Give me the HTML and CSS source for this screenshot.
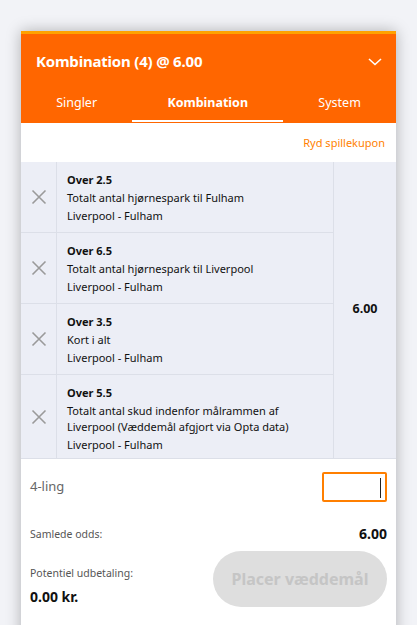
FILE: index.html
```html
<!DOCTYPE html>
<html lang="da">
<head>
<meta charset="utf-8">
<link rel="stylesheet" href="styles.css">
</head>
<body>
<div class="card">
  <div class="head">
    <div class="title-row">
      <span class="title">Kombination (4) @ 6.00</span>
      <svg class="chev" width="14" height="8" viewBox="0 0 14 8"><path d="M1 1 L7 6.5 L13 1" fill="none" stroke="#fff" stroke-width="1.6"/></svg>
    </div>
    <div class="tabs">
      <div class="tab">Singler</div>
      <div class="tab active">Kombination</div>
      <div class="tab">System</div>
    </div>
  </div>
  <div class="clear-row"><span class="clear">Ryd spillekupon</span></div>
  <div class="bets">
    <div class="rows">
      <div class="row">
        <div class="rm"><svg width="16" height="16" viewBox="0 0 16 16"><path d="M1.5 1.5 L14.5 14.5 M14.5 1.5 L1.5 14.5" stroke="#9a9a9a" stroke-width="1.6"/></svg></div>
        <div class="info"><div class="sel">Over 2.5</div><div class="mkt">Totalt antal hjørnespark til Fulham</div><div class="ev">Liverpool - Fulham</div></div>
      </div>
      <div class="row">
        <div class="rm"><svg width="16" height="16" viewBox="0 0 16 16"><path d="M1.5 1.5 L14.5 14.5 M14.5 1.5 L1.5 14.5" stroke="#9a9a9a" stroke-width="1.6"/></svg></div>
        <div class="info"><div class="sel">Over 6.5</div><div class="mkt">Totalt antal hjørnespark til Liverpool</div><div class="ev">Liverpool - Fulham</div></div>
      </div>
      <div class="row">
        <div class="rm"><svg width="16" height="16" viewBox="0 0 16 16"><path d="M1.5 1.5 L14.5 14.5 M14.5 1.5 L1.5 14.5" stroke="#9a9a9a" stroke-width="1.6"/></svg></div>
        <div class="info"><div class="sel">Over 3.5</div><div class="mkt">Kort i alt</div><div class="ev">Liverpool - Fulham</div></div>
      </div>
      <div class="row last">
        <div class="rm"><svg width="16" height="16" viewBox="0 0 16 16"><path d="M1.5 1.5 L14.5 14.5 M14.5 1.5 L1.5 14.5" stroke="#9a9a9a" stroke-width="1.6"/></svg></div>
        <div class="info"><div class="sel">Over 5.5</div><div class="mkt">Totalt antal skud indenfor målrammen af Liverpool (Væddemål afgjort via Opta data)</div><div class="ev">Liverpool - Fulham</div></div>
      </div>
    </div>
    <div class="odds">6.00</div>
  </div>
  <div class="foot">
    <div class="stake-row">
      <span class="lbl">4-ling</span>
      <div class="stake"><span class="caret"></span></div>
    </div>
    <div class="tot-row">
      <span class="small">Samlede odds:</span>
      <span class="big">6.00</span>
    </div>
    <div class="pay-row">
      <div class="pay">
        <span class="small">Potentiel udbetaling:</span>
        <span class="big">0.00 kr.</span>
      </div>
      <button class="place">Placer væddemål</button>
    </div>
  </div>
</div>
</body>
</html>
```
FILE: styles.css
```css
html, body { margin: 0; padding: 0; }
body {
  background: #f2f3f7;
  font-family: "Noto Sans", "Open Sans", sans-serif;
  color: #111;
  height: 625px;
  overflow: hidden;
  padding: 31px 21px 0;
  box-sizing: border-box;
}
.card {
  width: 375px;
  background: #fff;
  box-shadow: 0 0 14px rgba(0,0,0,0.28);
  height: 640px;
}
.head {
  background: #ff6600;
  border-top: 3px solid #ffa200;
  color: #fff;
}
.title-row {
  height: 53px;
  display: flex;
  align-items: center;
  justify-content: space-between;
  padding: 0 14px 0 15px;
}
.title { font-size: 15px; font-weight: 700; letter-spacing: -0.2px; }
.chev { margin-top: 2px; }
.tabs { display: flex; height: 36px; }
.tab {
  flex: 1 1 auto;
  text-align: center;
  font-size: 12.5px;
  line-height: 31px;
  border-bottom: 2px solid transparent;
  margin-bottom: 1px;
}
.tab.active { font-weight: 700; border-bottom-color: #fff; }
.clear-row {
  height: 39px;
  display: flex;
  align-items: center;
  justify-content: flex-end;
  padding-right: 11px;
}
.clear { color: #ff7f00; font-size: 11px; }
.bets {
  display: flex;
  background: #eceef6;
  border-bottom: 1px solid #dcdfe8;
}
.rows { width: 312px; flex-shrink: 0; border-right: 1px solid #dcdfe8; }
.row { display: flex; border-bottom: 1px solid #dcdfe8; }
.row.last { border-bottom: none; }
.rm {
  width: 35px;
  flex-shrink: 0;
  border-right: 1px solid #dcdfe8;
  display: flex;
  align-items: center;
  justify-content: center;
}
.info { flex: 1; padding: 10px 32px 8px 10px; font-size: 11px; line-height: 16px; }
.row.last .info { padding-bottom: 5px; }
.info > div + div { margin-top: 2px; }
.sel { font-weight: 700; }
.odds {
  flex: 1;
  display: flex;
  align-items: center;
  justify-content: center;
  font-weight: 700;
  font-size: 12.5px;
  padding-bottom: 3px;
}
.foot { padding: 11px 9px 0 9px; }
.stake-row { display: flex; justify-content: space-between; align-items: center; height: 34px; }
.lbl { color: #666; font-size: 13px; margin-top: -2px; }
.stake {
  width: 61px; height: 26px;
  border: 2px solid #ff7f00;
  border-radius: 2px;
  position: relative;
}
.caret { position: absolute; right: 4px; top: 4px; width: 1px; height: 20px; background: #222; }
.tot-row { display: flex; justify-content: space-between; align-items: center; margin-top: 20px; }
.small { color: #555; font-size: 10.5px; }
.big { font-weight: 700; font-size: 14px; }
.pay-row { display: flex; justify-content: space-between; align-items: center; margin-top: 8px; }
.pay { display: flex; flex-direction: column; gap: 7px; padding-top: 14px; }
.place {
  width: 174px; height: 56px;
  border: none; border-radius: 28px;
  background: #dedede; color: #c5c5c5;
  font-family: inherit; font-size: 16px; font-weight: 700;
}
```
